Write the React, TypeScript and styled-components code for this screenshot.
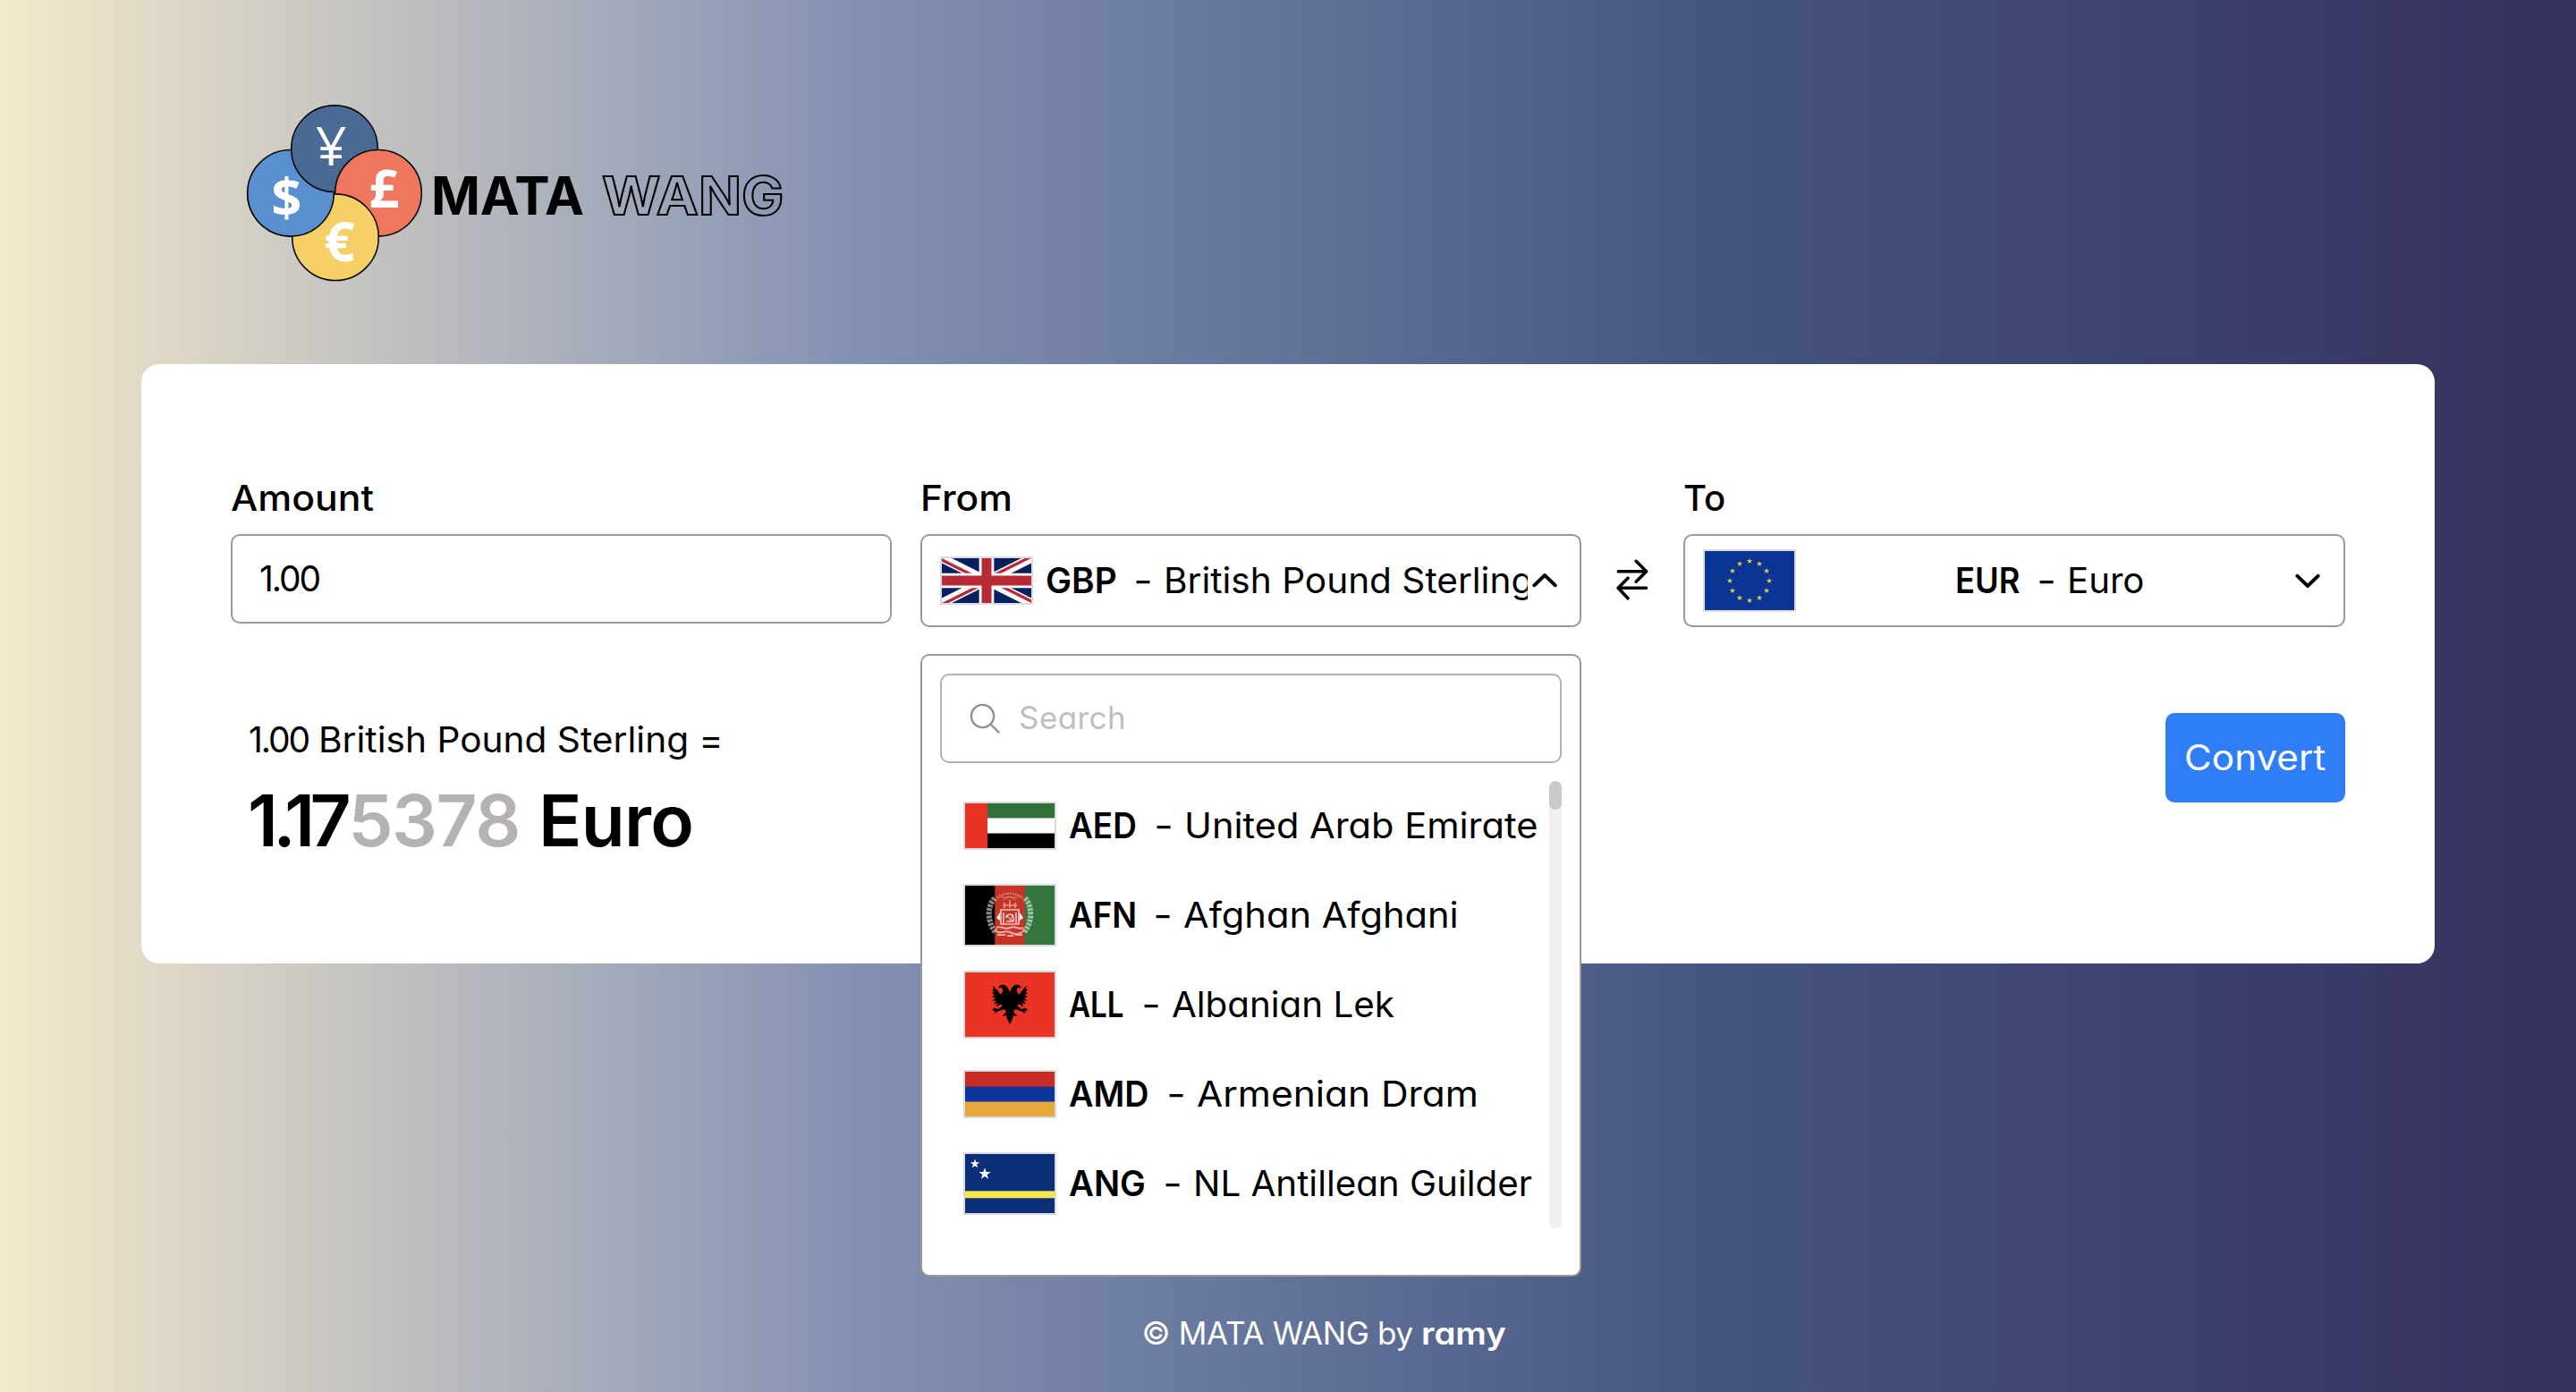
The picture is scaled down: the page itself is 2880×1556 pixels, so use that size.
import React from 'react';
import styled, { createGlobalStyle } from 'styled-components';

const GlobalStyle = createGlobalStyle`
  *, *::before, *::after { box-sizing: border-box; }
  body {
    margin: 0;
    font-family: Inter, "Open Sans", sans-serif;
    font-feature-settings: "cv11", "calt" 0;
    font-size: 39px;
    color: #000;
  }
  input, button {
    font-family: inherit;
    font-feature-settings: inherit;
  }
`;

interface Stretch {
  $sx: number;
}

const Page = styled.div`
  min-height: 1556px;
  display: flex;
  flex-direction: column;
  background: linear-gradient(90deg, #f5e9cb 0%, #8391b3 33%, #455681 66%, #35305e 100%);
`;

const Header = styled.header`
  height: 407px;
  padding: 117px 0 0 275px;
  display: flex;
  align-items: flex-start;
  gap: 9px;
`;

const Brand = styled.h1`
  margin: 0;
  height: 198px;
  padding-top: 4px;
  display: flex;
  align-items: center;
  gap: 20px;
  font-size: 59px;
  font-weight: 700;
  white-space: nowrap;
`;

const BrandSolid = styled.span`
  letter-spacing: -0.31px;
`;

const BrandOutline = styled.span`
  transform: scaleX(1.068);
  transform-origin: left center;
  color: transparent;
  -webkit-text-stroke: 2px #000;
`;

const Card = styled.main`
  width: 2564px;
  height: 670px;
  margin-left: 158px;
  padding: 120px 100px 0 100px;
  background: #fff;
  border-radius: 20px;
`;

const Fields = styled.div`
  height: 174px;
  display: grid;
  grid-template-columns: 739px 32px 739px 114px 740px;
`;

const Field = styled.div<{ $col: number }>`
  grid-column: ${(p) => p.$col};
  position: relative;
`;

const Label = styled.label<Stretch>`
  display: block;
  height: 60px;
  margin-bottom: 10px;
  line-height: 60px;
  font-weight: 500;
  transform: scaleX(${(p) => p.$sx});
  transform-origin: left center;
`;

const AmountInput = styled.input`
  display: block;
  width: 100%;
  height: 100px;
  padding: 0 30px 2px;
  border: 2px solid #999;
  border-radius: 10px;
  outline: none;
  background: #fff;
  color: #000;
  font-size: 39px;
  letter-spacing: -2.1px;
`;

const SelectBox = styled.div`
  height: 104px;
  padding: 0 20px;
  display: flex;
  align-items: center;
  border: 2px solid #999;
  border-radius: 10px;
  background: #fff;
`;

const SelectValue = styled.div<{ $fill?: boolean }>`
  flex: 1;
  min-width: 0;
  padding-left: ${(p) => (p.$fill ? 14 : 11)}px;
  display: flex;
  align-items: center;
  justify-content: ${(p) => (p.$fill ? 'flex-start' : 'center')};
  overflow: hidden;
  white-space: nowrap;
  line-height: 60px;
`;

const ChevronSlot = styled.div`
  width: 38px;
  display: flex;
  justify-content: center;
`;

const SwapButton = styled.div`
  grid-column: 4;
  height: 104px;
  margin-top: 70px;
  display: flex;
  align-items: center;
  justify-content: center;
`;

const Code = styled.span<Stretch & { $w: number }>`
  flex: none;
  width: ${(p) => p.$w}px;
  margin-right: 23px;
  font-weight: 570;
  transform: scaleX(${(p) => p.$sx});
  transform-origin: left center;
`;

const Dash = styled.span`
  flex: none;
  width: 18px;
  transform: scaleX(1.2);
`;

const Name = styled.span<Stretch>`
  flex: none;
  margin-left: 14px;
  transform: scaleX(${(p) => p.$sx});
  transform-origin: left center;
`;

const Dropdown = styled.div`
  position: absolute;
  z-index: 2;
  top: 204px;
  left: 0;
  width: 739px;
  height: 696px;
  padding: 20px;
  border: 2px solid #999;
  border-radius: 10px;
  background: #fff;
`;

const SearchBox = styled.div`
  height: 100px;
  margin-bottom: 20px;
  padding-left: 31px;
  display: flex;
  align-items: center;
  gap: 21px;
  border: 2px solid #b2b2b2;
  border-radius: 10px;
`;

const SearchInput = styled.input`
  width: 500px;
  padding: 0 0 3px;
  border: 0;
  outline: none;
  background: transparent;
  font-size: 35px;
  letter-spacing: 0.42px;
  &::placeholder {
    color: #bfbfbf;
    opacity: 1;
  }
`;

const ListArea = styled.div`
  height: 500px;
  display: flex;
`;

const List = styled.ul`
  flex: 1;
  min-width: 0;
  margin: 0;
  padding: 0;
  list-style: none;
  overflow: hidden;
`;

const Option = styled.li`
  height: 100px;
  padding-left: 26px;
  display: flex;
  align-items: center;
  white-space: nowrap;
`;

const OptionText = styled.div`
  padding-left: 14px;
  display: flex;
  line-height: 60px;
`;

const ScrollTrack = styled.div`
  width: 14px;
  border-radius: 7px;
  background: #f0f0f0;
`;

const ScrollThumb = styled.div`
  height: 32px;
  border-radius: 7px;
  background: #c9c9c9;
`;

const Lower = styled.div`
  margin-top: 96px;
  display: flex;
  justify-content: space-between;
  align-items: flex-start;
`;

const ResultBlock = styled.div`
  padding-left: 19px;
  white-space: nowrap;
`;

const ResultSource = styled.p`
  margin: 0;
  padding-left: 1px;
  display: flex;
  line-height: 60px;
`;

const SourceAmount = styled.span`
  margin-right: 11px;
  letter-spacing: -2.1px;
`;

const SourceName = styled.span`
  transform: scaleX(1.042);
  transform-origin: left center;
`;

const ResultValue = styled.p`
  margin: 0;
  display: flex;
  font-size: 80px;
  font-weight: 590;
  line-height: 119px;
`;

const Major = styled.span`
  letter-spacing: -5.5px;
`;

const Minor = styled.span`
  margin: 0 21px 0 2px;
  color: #b7b2b2;
  letter-spacing: -1.4px;
`;

const Unit = styled.span`
  letter-spacing: -0.7px;
`;

const ConvertButton = styled.button`
  width: 201px;
  height: 100px;
  padding: 0 0 2px;
  display: flex;
  align-items: center;
  justify-content: center;
  border: 0;
  border-radius: 10px;
  background: #2f7ef7;
  color: #fff;
  font-size: 39px;
`;

const ConvertLabel = styled.span`
  transform: scaleX(1.082);
`;

const Footer = styled.footer`
  height: 60px;
  margin-top: 383px;
  padding-left: 72px;
  display: flex;
  justify-content: center;
  gap: 9px;
  color: #fff;
  font-size: 35px;
  line-height: 60px;
`;

const Copyright = styled.span`
  letter-spacing: -0.31px;
`;

const Author = styled.span`
  font-weight: 600;
  transform: scaleX(1.096);
  transform-origin: left center;
`;

const FlagFrame = styled.span<{ $h: number }>`
  flex: none;
  width: 104px;
  height: ${(p) => p.$h + 4}px;
  border: 2px solid #dbdbdb;
  display: block;
  svg {
    display: block;
    width: 100px;
    height: ${(p) => p.$h}px;
  }
`;

const starPoints = (cx: number, cy: number, r: number) =>
  Array.from({ length: 10 }, (_, i) => {
    const a = (Math.PI / 5) * i - Math.PI / 2;
    const d = i % 2 ? r * 0.4 : r;
    return `${(cx + d * Math.cos(a)).toFixed(2)},${(cy + d * Math.sin(a)).toFixed(2)}`;
  }).join(' ');

const FlagGB = () => (
  <FlagFrame $h={50}>
    <svg viewBox="0 0 60 30" preserveAspectRatio="none">
      <clipPath id="gb-diag">
        <path d="M30 15h30v15zv15H0zH0V0zV0h30z" />
      </clipPath>
      <path d="M0 0h60v30H0z" fill="#08205f" />
      <path d="M0 0l60 30M60 0L0 30" stroke="#fff" strokeWidth="6" />
      <path d="M0 0l60 30M60 0L0 30" stroke="#ba2a36" strokeWidth="4" clipPath="url(#gb-diag)" />
      <path d="M30 0v30M0 15h60" stroke="#fff" strokeWidth="10" />
      <path d="M30 0v30M0 15h60" stroke="#ba2a36" strokeWidth="6.6" />
    </svg>
  </FlagFrame>
);

const FlagEU = () => (
  <FlagFrame $h={66}>
    <svg viewBox="0 0 100 66">
      <rect width="100" height="66" fill="#0b3594" />
      {Array.from({ length: 12 }, (_, i) => (
        <polygon
          key={i}
          fill="#efce3b"
          points={starPoints(50 + 22 * Math.sin((i * Math.PI) / 6), 33.3 - 22 * Math.cos((i * Math.PI) / 6), 3.3)}
        />
      ))}
    </svg>
  </FlagFrame>
);

const FlagAE = () => (
  <FlagFrame $h={50}>
    <svg viewBox="0 0 100 50">
      <rect width="100" height="50" fill="#fff" />
      <rect width="100" height="16.5" fill="#317039" />
      <rect y="33.5" width="100" height="16.5" fill="#000" />
      <rect width="25" height="50" fill="#ea3323" />
    </svg>
  </FlagFrame>
);

const FlagAF = () => (
  <FlagFrame $h={66}>
    <svg viewBox="0 0 100 66">
      <rect width="34" height="66" fill="#000" />
      <rect x="33.3" width="34" height="66" fill="#c43427" />
      <rect x="66.6" width="34" height="66" fill="#34763e" />
      <g fill="none" stroke="#fff">
        <path d="M33 14C25 22 24 40 34 52M67 14C75 22 76 40 66 52" strokeWidth="6" strokeDasharray="3 1.2" opacity="0.55" />
        <path d="M36 14C42 7 58 7 64 14" strokeWidth="2" strokeDasharray="2 1" opacity="0.4" />
        <path d="M40 13h20M43 16l7-4 7 4" strokeWidth="1" opacity="0.35" />
        <path d="M50 16v9M44 19v6M56 19v6M42 22h16" strokeWidth="1.6" opacity="0.5" />
        <path d="M40 27h20v16H40zM43 30v12M57 30v12M46 36c0-5 8-5 8 0v4h-8" strokeWidth="1.7" opacity="0.7" />
        <path d="M46 33l7 7M54 32l-5 9" strokeWidth="1.2" opacity="0.6" />
        <path d="M35 47c5-3 9 3 15 0s10 3 15 0M35 51c5 4 9-2 15 1s10 3 15-1M36 55h9M47 56h7M56 55h8" strokeWidth="2" opacity="0.6" />
      </g>
      <path d="M35 36l4-6v9zM65 36l-4-6v9z" fill="#fff" />
    </svg>
  </FlagFrame>
);

const EagleHalf = () => (
  <path d="M0 22L1.6 18.5C3 14 8 12.6 11 14.5L13 17.2L9 17L7.5 20L10 25L14 20L19 14.5L17.8 19L20 19L17.5 22L20 23.5L16.8 25L20 27.6L15.8 28.2L19.5 31.8L15.2 31.2L18 35.5L13.6 34L15.5 38.5L10.5 35.5L8 37L13 41L17.5 39.5L20 42.5L16.5 43L17.5 46L13 43.2L6 41L4 44L8.5 49L4 48L3 52L0 58Z" />
);

const FlagAL = () => (
  <FlagFrame $h={72}>
    <svg viewBox="0 0 100 72">
      <rect width="100" height="72" fill="#ea3323" />
      <g transform="translate(50 0)">
        <EagleHalf />
        <g transform="scale(-1 1)">
          <EagleHalf />
        </g>
      </g>
    </svg>
  </FlagFrame>
);

const FlagAM = () => (
  <FlagFrame $h={50}>
    <svg viewBox="0 0 100 50">
      <rect width="100" height="50" fill="#0b3599" />
      <rect width="100" height="16.7" fill="#c72b25" />
      <rect y="33.5" width="100" height="16.5" fill="#e8a83b" />
    </svg>
  </FlagFrame>
);

const FlagCW = () => (
  <FlagFrame $h={66}>
    <svg viewBox="0 0 100 66">
      <rect width="100" height="66" fill="#0a2e78" />
      <rect y="41.3" width="100" height="8" fill="#f6e54f" />
      <polygon points={starPoints(11, 11, 5.4)} fill="#fff" />
      <polygon points={starPoints(22, 22.2, 7)} fill="#fff" />
    </svg>
  </FlagFrame>
);

const Chevron = ({ up }: { up?: boolean }) => (
  <svg width="32" height="32" viewBox="0 0 32 32" fill="none" stroke="#000" strokeWidth="3.9" strokeLinecap="round" strokeLinejoin="round">
    <path d={up ? 'M4.3 21.3L16 10L27.8 21.3' : 'M3.3 10.7L15 22L26.8 10.7'} />
  </svg>
);

const SwapIcon = () => (
  <svg width="40" height="48" viewBox="0 0 40 48" fill="none" stroke="#000" strokeWidth="3.5" strokeLinecap="round" strokeLinejoin="round">
    <path d="M4.3 13.7H35.5M24.2 2.3L35.6 13.7L24.2 25.2M35.5 32.3H4.3M15 21.2L4.1 32.3L15 43.8" />
  </svg>
);

const SearchIcon = () => (
  <svg width="34" height="34" viewBox="0 0 34 34" fill="none" stroke="#8e8e8e" strokeWidth="2.4" strokeLinecap="round">
    <circle cx="14.5" cy="14.5" r="12.6" />
    <path d="M23.5 23.5L32.5 32.5" />
  </svg>
);

const LogoGlyph = styled.text`
  font-family: "Open Sans", "Noto Sans", sans-serif;
  fill: #fff;
  text-anchor: middle;
`;

const Logo = () => (
  <svg width="198" height="198" viewBox="275 117 198 198">
    <clipPath id="lower-half">
      <rect x="270" y="215.8" width="120" height="60" />
    </clipPath>
    <g stroke="#0a0a0a" strokeWidth="1.6">
      <circle cx="325" cy="215.8" r="48.3" fill="#5a90cf" />
      <circle cx="374" cy="166.2" r="48.3" fill="#486a94" />
      <circle cx="423" cy="215.8" r="48.3" fill="#ef775f" />
      <circle cx="375" cy="265.2" r="48.3" fill="#f6cf65" />
      <circle cx="325" cy="215.8" r="48.3" fill="#5a90cf" clipPath="url(#lower-half)" />
    </g>
    <LogoGlyph x="370.2" y="185" fontSize="61" fontWeight="500">¥</LogoGlyph>
    <LogoGlyph x="320.3" y="241.5" fontSize="59" fontWeight="700">$</LogoGlyph>
    <LogoGlyph x="429.4" y="232" fontSize="59" fontWeight="700">£</LogoGlyph>
    <LogoGlyph x="379.4" y="291.5" fontSize="60" fontWeight="700">€</LogoGlyph>
  </svg>
);

const currencies = [
  { code: 'AED', codeWidth: 74, codeStretch: 0.945, name: 'United Arab Emirate', nameStretch: 1.065, Flag: FlagAE },
  { code: 'AFN', codeWidth: 73, codeStretch: 0.94, name: 'Afghan Afghani', nameStretch: 1.066, Flag: FlagAF },
  { code: 'ALL', codeWidth: 60, codeStretch: 0.85, name: 'Albanian Lek', nameStretch: 1.034, Flag: FlagAL },
  { code: 'AMD', codeWidth: 88, codeStretch: 0.968, name: 'Armenian Dram', nameStretch: 1.087, Flag: FlagAM },
  { code: 'ANG', codeWidth: 84, codeStretch: 0.985, name: 'NL Antillean Guilder', nameStretch: 1.034, Flag: FlagCW },
];

interface CurrencyTextProps {
  code: string;
  codeWidth: number;
  codeStretch: number;
  name: string;
  nameStretch: number;
}

const CurrencyText = ({ code, codeWidth, codeStretch, name, nameStretch }: CurrencyTextProps) => (
  <>
    <Code $w={codeWidth} $sx={codeStretch}>{code}</Code>
    <Dash>-</Dash>
    <Name $sx={nameStretch}>{name}</Name>
  </>
);

export default function App() {
  return (
    <>
      <GlobalStyle />
      <Page>
        <Header>
          <Logo />
          <Brand>
            <BrandSolid>MATA</BrandSolid>
            <BrandOutline>WANG</BrandOutline>
          </Brand>
        </Header>
        <Card>
          <Fields>
            <Field $col={1}>
              <Label $sx={1.095}>Amount</Label>
              <AmountInput defaultValue="1.00" />
            </Field>
            <Field $col={3}>
              <Label $sx={1.088}>From</Label>
              <SelectBox>
                <FlagGB />
                <SelectValue $fill>
                  <CurrencyText code="GBP" codeWidth={77} codeStretch={0.995} name="British Pound Sterling" nameStretch={1.04} />
                </SelectValue>
                <ChevronSlot>
                  <Chevron up />
                </ChevronSlot>
              </SelectBox>
              <Dropdown>
                <SearchBox>
                  <SearchIcon />
                  <SearchInput placeholder="Search" />
                </SearchBox>
                <ListArea>
                  <List>
                    {currencies.map(({ Flag, ...text }) => (
                      <Option key={text.code}>
                        <Flag />
                        <OptionText>
                          <CurrencyText {...text} />
                        </OptionText>
                      </Option>
                    ))}
                  </List>
                  <ScrollTrack>
                    <ScrollThumb />
                  </ScrollTrack>
                </ListArea>
              </Dropdown>
            </Field>
            <SwapButton>
              <SwapIcon />
            </SwapButton>
            <Field $col={5}>
              <Label $sx={1.03}>To</Label>
              <SelectBox>
                <FlagEU />
                <SelectValue>
                  <CurrencyText code="EUR" codeWidth={70} codeStretch={0.93} name="Euro" nameStretch={1.03} />
                </SelectValue>
                <ChevronSlot>
                  <Chevron />
                </ChevronSlot>
              </SelectBox>
            </Field>
          </Fields>
          <Lower>
            <ResultBlock>
              <ResultSource>
                <SourceAmount>1.00</SourceAmount>
                <SourceName>British Pound Sterling =</SourceName>
              </ResultSource>
              <ResultValue>
                <Major>1.17</Major>
                <Minor>5378</Minor>
                <Unit>Euro</Unit>
              </ResultValue>
            </ResultBlock>
            <ConvertButton>
              <ConvertLabel>Convert</ConvertLabel>
            </ConvertButton>
          </Lower>
        </Card>
        <Footer>
          <Copyright>© MATA WANG by</Copyright>
          <Author>ramy</Author>
        </Footer>
      </Page>
    </>
  );
}
